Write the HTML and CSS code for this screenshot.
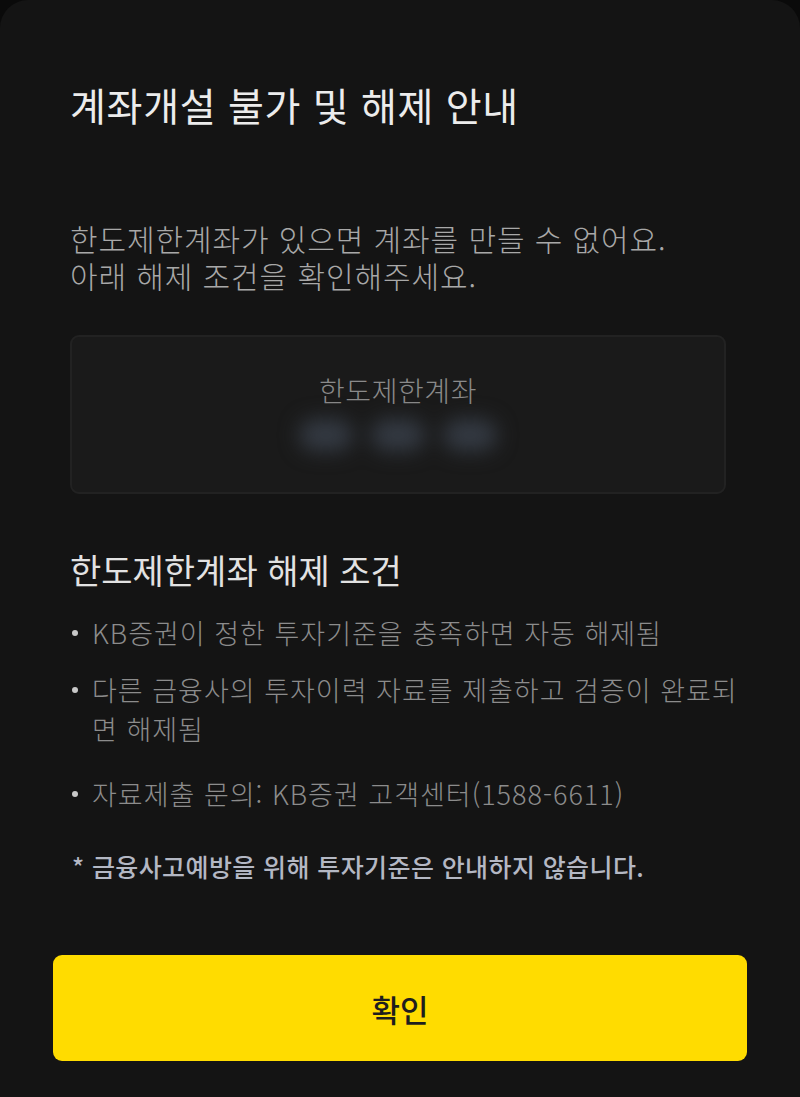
FILE: index.html
```html
<!DOCTYPE html>
<html lang="ko">
<head>
<meta charset="utf-8">
<link rel="stylesheet" href="styles.css">
</head>
<body>
<div class="sheet">
  <div class="content">
    <h1 class="title">계좌개설 불가 및 해제 안내</h1>
    <p class="desc">한도제한계좌가 있으면 계좌를 만들 수 없어요.<br>아래 해제 조건을 확인해주세요.</p>
    <div class="account-box">
      <div class="account-label">한도제한계좌</div>
      <div class="account-number">
        <span class="blob"></span><span class="blob"></span><span class="blob"></span>
      </div>
    </div>
    <h2 class="section-title">한도제한계좌 해제 조건</h2>
    <ul class="conditions">
      <li class="item-1">KB증권이 정한 투자기준을 충족하면 자동 해제됨</li>
      <li class="item-2">다른 금융사의 투자이력 자료를 제출하고 검증이 완료되면 해제됨</li>
      <li class="item-3">자료제출 문의: KB증권 고객센터(1588-6611)</li>
    </ul>
    <p class="note">* 금융사고예방을 위해 투자기준은 안내하지 않습니다.</p>
  </div>
  <button class="confirm">확인</button>
</div>
</body>
</html>
```

FILE: styles.css
```css
html, body {
  margin: 0;
  padding: 0;
  background: #0a0a0a;
}
body {
  font-family: "Noto Sans CJK KR", "Noto Sans", sans-serif;
}
.sheet {
  background: #141414;
  min-height: 1097px;
  border-radius: 28px 28px 0 0;
  padding: 0 53px 36px 53px;
  box-sizing: border-box;
  display: flex;
  flex-direction: column;
}
.content {
  padding: 78px 0 0 17px;
  display: flex;
  flex-direction: column;
}
.title {
  margin: 0;
  font-size: 39px;
  line-height: 52px;
  font-weight: 400;
  color: #ececec;
  letter-spacing: 0.7px;
}
.desc {
  margin: 90px 0 0 0;
  font-size: 30px;
  line-height: 37px;
  font-weight: 300;
  color: #a8a8a8;
  letter-spacing: 0.9px;
}
.account-box {
  margin: 41px 21px 0 0;
  height: 159px;
  box-sizing: border-box;
  background: #1a1a1a;
  border: 2px solid #222222;
  border-radius: 9px;
  display: flex;
  flex-direction: column;
  align-items: center;
  padding-top: 34px;
}
.account-label {
  font-size: 28px;
  line-height: 38px;
  font-weight: 300;
  color: #8a8a8a;
  letter-spacing: 0.6px;
}
.account-number {
  margin-top: 10px;
  display: flex;
  gap: 18px;
  filter: blur(10px);
}
.blob {
  width: 54px;
  height: 32px;
  border-radius: 16px;
  background: #343a43;
}
.section-title {
  margin: 54px 0 0 0;
  font-size: 34px;
  line-height: 44px;
  font-weight: 400;
  color: #e2e2e2;
}
.conditions {
  list-style: none;
  margin: 21px 0 0 0;
  padding: 0;
  width: 677px;
  display: flex;
  flex-direction: column;
}
.conditions li {
  position: relative;
  padding-left: 22px;
  font-size: 27px;
  line-height: 39px;
  font-weight: 300;
  color: #8c8c8c;
  letter-spacing: 1px;
}
.conditions li::before {
  content: "";
  position: absolute;
  left: 2px;
  top: 17px;
  width: 6px;
  height: 6px;
  border-radius: 50%;
  background: #c8c8c8;
}
.conditions .item-2 {
  margin-top: 18px;
}
.conditions .item-3 {
  margin-top: 26px;
}
.note {
  margin: 36px 0 0 2px;
  font-size: 25px;
  line-height: 34px;
  font-weight: 500;
  color: #b4b8c4;
  letter-spacing: 0.4px;
}
.confirm {
  margin-top: auto;
  height: 106px;
  border: none;
  border-radius: 9px;
  background: #ffdc00;
  color: #1e1e1e;
  font-family: "Noto Sans CJK KR", "Noto Sans", sans-serif;
  font-size: 31px;
  font-weight: 500;
  cursor: pointer;
}
```
